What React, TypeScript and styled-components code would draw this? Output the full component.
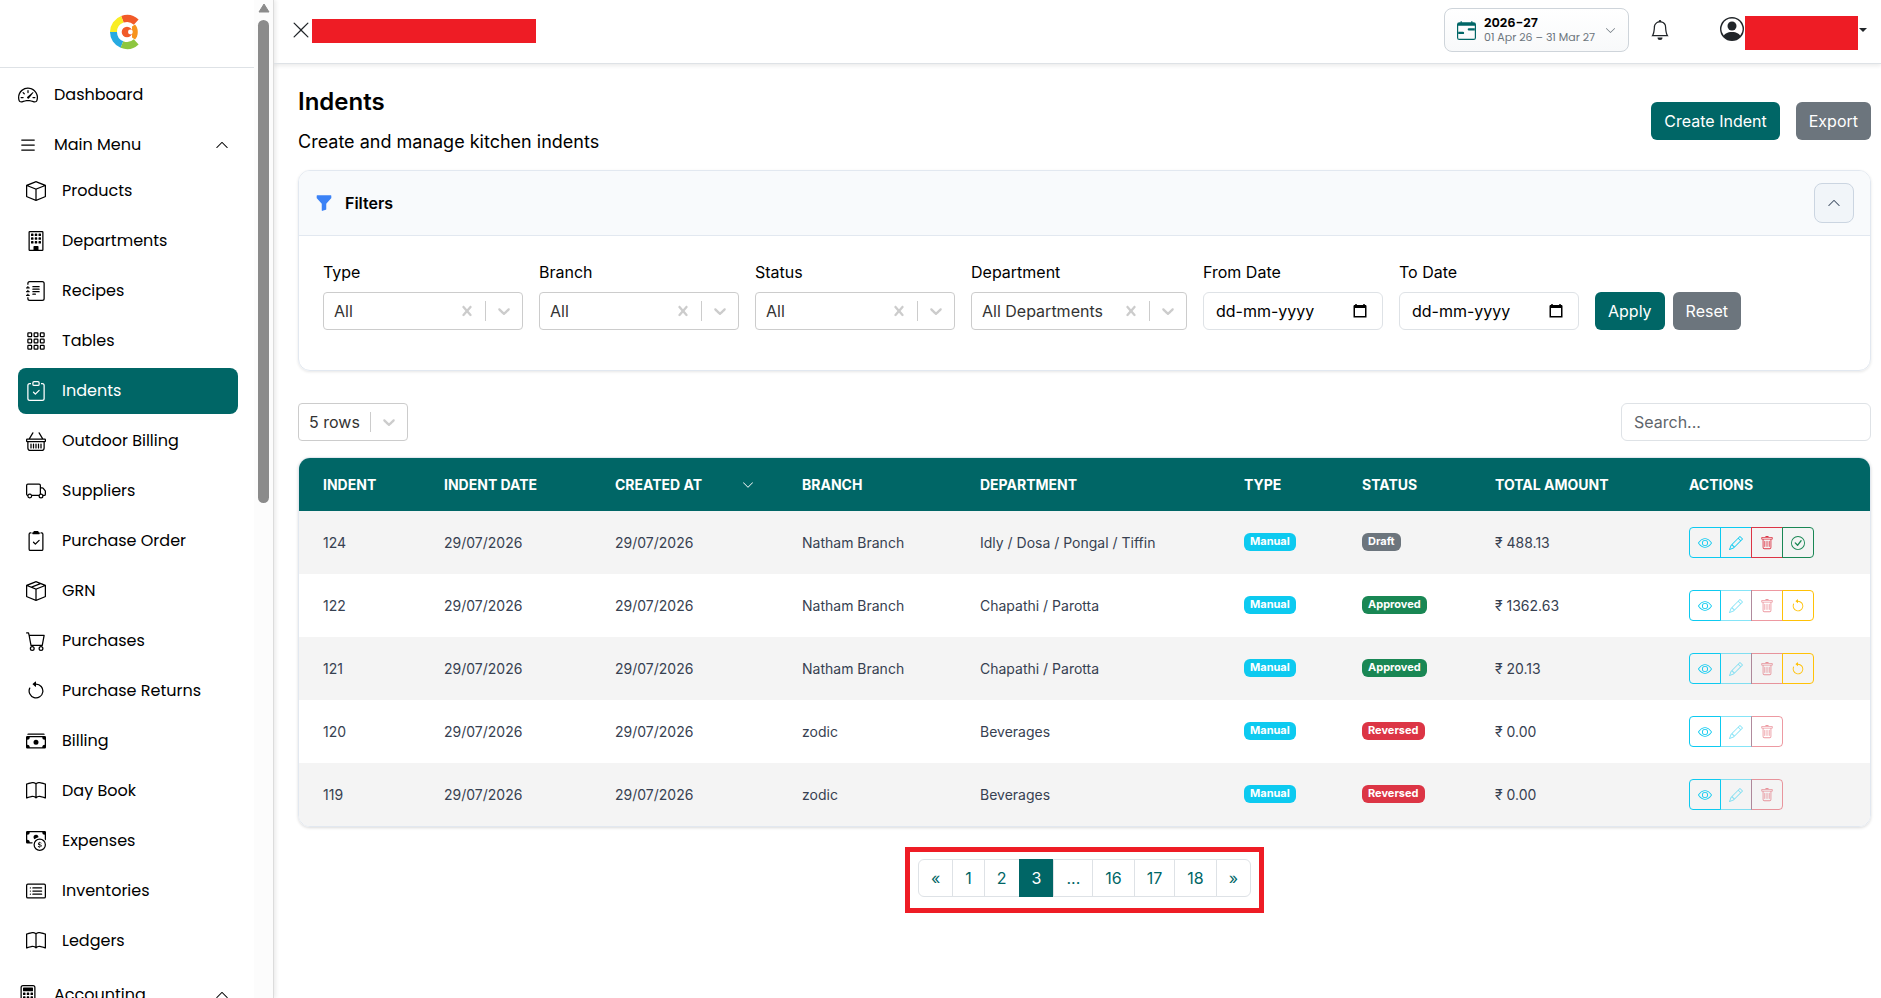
import React from 'react';
import styled, { createGlobalStyle, css } from 'styled-components';
import type { IconType } from 'react-icons';
import {
  BsArrowCounterclockwise,
  BsBasket,
  BsBell,
  BsBook,
  BsBox,
  BsBoxSeam,
  BsBuilding,
  BsCalculator,
  BsCalendarRange,
  BsCardList,
  BsCart,
  BsCashCoin,
  BsCashStack,
  BsCheckCircle,
  BsChevronDown,
  BsChevronUp,
  BsClipboard2Check,
  BsClipboardCheck,
  BsEye,
  BsFunnelFill,
  BsGrid3X3Gap,
  BsJournalText,
  BsList,
  BsPencil,
  BsPersonCircle,
  BsSpeedometer2,
  BsTrash,
  BsTruck,
  BsXLg,
} from 'react-icons/bs';

const teal = '#006666';
const slate = '#6c757d';
const line = '#e2e8f0';
const inter = "Inter, 'Liberation Sans', sans-serif";
const poppins = "Poppins, Inter, 'Liberation Sans', sans-serif";

const GlobalStyle = createGlobalStyle`
  *, *::before, *::after { box-sizing: border-box; }
  body {
    margin: 0;
    background: #fff;
    color: #000;
    font-family: ${inter};
    font-size: 16px;
    line-height: 24px;
  }
  button, input, select { font: inherit; color: inherit; }
  button { cursor: pointer; }
  h1, h2, p, ul { margin: 0; padding: 0; }
  svg { display: block; flex: none; }
`;

const Shell = styled.div`
  display: flex;
  height: 100vh;
  overflow: hidden;
`;

/* ---------- sidebar ---------- */

const Sidebar = styled.aside`
  display: flex;
  flex: none;
  width: 274px;
  border-right: 1px solid #dcdcdc;
  box-shadow: 2px 0 4px rgba(0, 0, 0, 0.08);
  font-family: ${poppins};
`;

const SidebarBody = styled.div`
  flex: 1;
  overflow: hidden;
`;

const Brand = styled.div`
  display: flex;
  justify-content: center;
  height: 68px;
  padding: 14px 0 0;
  border-bottom: 1px solid #dee2e6;
`;

const Nav = styled.nav`
  padding: 4px 16px 0 18px;
`;

const NavList = styled.ul`
  list-style: none;
`;

const NavGroup = styled.li<{ $gap?: number }>`
  margin-bottom: ${(p) => p.$gap ?? 4}px;
`;

const navRow = css`
  display: flex;
  align-items: center;
  gap: 16px;
  width: 100%;
  height: 46px;
  border: 0;
  border-radius: 8px;
  background: none;
  color: #000;
  font-size: 16px;
  text-align: left;
  text-decoration: none;
`;

const TopLink = styled.a`
  ${navRow}
`;

const GroupButton = styled.button`
  ${navRow}
  padding: 0 9px 0 0;
`;

const GroupLabel = styled.span`
  flex: 1;
`;

const SubLink = styled.a<{ $active?: boolean }>`
  ${navRow}
  width: 220px;
  margin-bottom: 4px;
  padding: 0 8px;
  ${(p) => p.$active && css`
    background: ${teal};
    color: #fff;
  `}
`;

const ScrollTrack = styled.div`
  display: flex;
  flex-direction: column;
  align-items: center;
  gap: 6px;
  width: 19px;
  padding-top: 3px;
  background: #fcfcfc;
`;

const ScrollThumb = styled.div`
  width: 11px;
  height: 48.5%;
  border-radius: 6px;
  background: #8b8b8b;
`;

/* ---------- top bar ---------- */

const Page = styled.div`
  flex: 1;
  min-width: 0;
  overflow: hidden;
`;

const TopBar = styled.header`
  display: flex;
  align-items: flex-start;
  justify-content: space-between;
  height: 64px;
  padding: 0 14px 0 17px;
  border-bottom: 1px solid #dee2e6;
  box-shadow: 0 2px 4px rgba(0, 0, 0, 0.08);
`;

const TopLeft = styled.div`
  display: flex;
  align-items: center;
  height: 62px;
  gap: 1px;
`;

const TopRight = styled.div`
  display: flex;
  align-items: center;
  height: 60px;
`;

const PlainButton = styled.button`
  display: flex;
  align-items: center;
  padding: 0;
  border: 0;
  background: none;
  color: #212529;
`;

const CloseButton = styled(PlainButton)`
  padding-bottom: 2px;
`;

const Redacted = styled.span<{ $w: number; $h: number }>`
  display: block;
  width: ${(p) => p.$w}px;
  height: ${(p) => p.$h}px;
  background: #ee1c25;
`;

const YearButton = styled.button`
  display: flex;
  align-items: center;
  gap: 8px;
  width: 185px;
  height: 44px;
  margin-right: 21px;
  padding: 0 12px;
  border: 1px solid #ced4da;
  border-radius: 8px;
  background: linear-gradient(#fff, #f8f9fa);
  color: ${teal};
  font-family: ${poppins};
  text-align: left;
`;

const YearText = styled.span`
  display: flex;
  flex: 1;
  flex-direction: column;
  font-size: 11px;
  line-height: 14px;
  color: ${slate};
  white-space: nowrap;
`;

const YearName = styled.strong`
  font-size: 13px;
  font-weight: 600;
  line-height: 14px;
  color: #000;
`;

const UserMenu = styled(PlainButton)`
  gap: 1px;
  margin-left: 50px;
`;

const Avatar = styled.span`
  margin-bottom: 2px;
`;

const UserName = styled.span`
  margin-top: 6px;
`;

const Caret = styled.span`
  border-top: 4px solid #212529;
  border-right: 4px solid transparent;
  border-left: 4px solid transparent;
`;

/* ---------- page content ---------- */

const Content = styled.main`
  padding: 22px 10px 24px 24px;
`;

const PageHead = styled.div`
  display: flex;
  align-items: center;
  justify-content: space-between;
  margin-bottom: 14px;
`;

const Title = styled.h1`
  margin-bottom: 10px;
  font-size: 24px;
  font-weight: 600;
  line-height: 32px;
`;

const Subtitle = styled.p`
  font-size: 18px;
  line-height: 28px;
`;

const ButtonRow = styled.div<{ $gap: number }>`
  display: flex;
  gap: ${(p) => p.$gap}px;
`;

const Button = styled.button<{ $tone?: 'teal' | 'grey' }>`
  height: 38px;
  padding: 0 13px;
  border: 0;
  border-radius: 6px;
  background: ${(p) => (p.$tone === 'grey' ? slate : teal)};
  color: #fff;
  white-space: nowrap;
`;

const Card = styled.section`
  margin-bottom: 32px;
  border: 1px solid ${line};
  border-radius: 12px;
  box-shadow: 0 1px 3px rgba(0, 0, 0, 0.1);
  overflow: hidden;
`;

const CardHead = styled.div`
  display: flex;
  align-items: center;
  justify-content: space-between;
  height: 65px;
  padding: 0 16px;
  border-bottom: 1px solid ${line};
  background: #f8fafc;
`;

const CardTitle = styled.h2`
  display: flex;
  align-items: center;
  gap: 12px;
  font-size: 16px;
  font-weight: 600;
`;

const CollapseButton = styled.button`
  display: flex;
  align-items: center;
  justify-content: center;
  width: 40px;
  height: 40px;
  padding: 0;
  border: 1px solid #cbd5e1;
  border-radius: 8px;
  background: #f1f5f9;
  color: #475569;
`;

const FilterForm = styled.form`
  display: flex;
  flex-wrap: wrap;
  align-items: flex-end;
  gap: 16px;
  padding: 24px 24px 40px;
`;

const Field = styled.div<{ $w: number }>`
  display: flex;
  flex-direction: column;
  gap: 8px;
  width: ${(p) => p.$w}px;
`;

const SelectBox = styled.div`
  display: flex;
  align-items: center;
  height: 38px;
  border: 1px solid #ccc;
  border-radius: 4px;
  color: #ccc;
`;

const NativeSelect = styled.select`
  flex: 1;
  min-width: 0;
  height: 36px;
  padding: 0 0 0 10px;
  border: 0;
  background: none;
  color: #333;
  appearance: none;
  outline: 0;
`;

const IconSlot = styled.button`
  display: flex;
  padding: 8px;
  border: 0;
  background: none;
  color: #ccc;
`;

const Divider = styled.span`
  width: 1px;
  height: 20px;
  background: #ccc;
`;

const InputBox = styled.div<{ $w?: number }>`
  display: flex;
  align-items: center;
  width: ${(p) => (p.$w ? `${p.$w}px` : 'auto')};
  height: 38px;
  padding: 0 15px 0 12px;
  border: 1px solid #dee2e6;
  border-radius: 6px;
`;

const TextInput = styled.input<{ $dark?: boolean }>`
  flex: 1;
  min-width: 0;
  padding: 0;
  border: 0;
  background: none;
  outline: 0;
  &::placeholder {
    color: ${(p) => (p.$dark ? '#000' : '#5f656b')};
    opacity: 1;
  }
`;

const TableTools = styled.div`
  display: flex;
  justify-content: space-between;
  margin-bottom: 16px;
`;

const RowsPicker = styled.div`
  width: 110px;
`;

/* ---------- table ---------- */

const TableCard = styled.div`
  border: 1px solid ${line};
  border-radius: 12px;
  box-shadow: 0 1px 3px rgba(0, 0, 0, 0.15);
  overflow: hidden;
`;

const Table = styled.table`
  width: 100%;
  border-collapse: collapse;
  table-layout: fixed;
  font-size: 14px;
`;

const Th = styled.th<{ $w: number }>`
  width: ${(p) => p.$w}px;
  height: 53px;
  padding: 0 24px;
  background: ${teal};
  color: #fff;
  font-weight: 700;
  text-align: left;
  white-space: nowrap;
`;

const HeadLabel = styled.span`
  display: flex;
  align-items: center;
  justify-content: space-between;
`;

const Row = styled.tr`
  height: 63px;
  &:nth-child(odd) { background: #f4f4f4; }
`;

const Td = styled.td`
  padding: 0 0 0 24px;
  color: #374151;
  white-space: nowrap;
`;

const Badge = styled.span<{ $bg: string }>`
  display: block;
  width: fit-content;
  margin-bottom: 2px;
  padding: 2px 6px 4px;
  border-radius: 6px;
  background: ${(p) => p.$bg};
  color: #fff;
  font-size: 11px;
  font-weight: 700;
  line-height: 12px;
`;

const ActionGroup = styled.div`
  display: flex;
`;

const ActionButton = styled.button<{ $tone: string }>`
  position: relative;
  z-index: 1;
  display: flex;
  align-items: center;
  justify-content: center;
  width: 32px;
  height: 31px;
  padding: 0;
  border: 1px solid ${(p) => p.$tone};
  background: none;
  color: ${(p) => p.$tone};
  &:disabled { z-index: 0; opacity: 0.5; }
  &:first-child { border-radius: 4px 0 0 4px; }
  &:last-child { border-radius: 0 4px 4px 0; }
  & + & { margin-left: -1px; }
`;

/* ---------- pagination ---------- */

const PagerFrame = styled.nav`
  width: fit-content;
  margin: 20px auto 0;
  padding: 7px 8px 11px;
  border: 5px solid #ee1c25;
`;

const PagerList = styled.ul`
  display: flex;
  list-style: none;
`;

const PageButton = styled.button<{ $active?: boolean }>`
  height: 38px;
  padding: 0 12px;
  border: 1px solid ${(p) => (p.$active ? teal : '#dee2e6')};
  background: ${(p) => (p.$active ? teal : '#fff')};
  color: ${(p) => (p.$active ? '#fff' : teal)};
  li + li > & { margin-left: -1px; }
  li:first-child > & { border-radius: 6px 0 0 6px; }
  li:last-child > & { border-radius: 0 6px 6px 0; }
`;

/* ---------- drawings ---------- */

const Logo = () => {
  const arcs = [
    { color: '#f15a29', from: -110, len: 63 },
    { color: '#f9ed25', from: 180, len: 70 },
    { color: '#27aae1', from: 112, len: 68 },
    { color: '#8dc63f', from: 47, len: 65 },
  ];
  return (
    <svg width="36" height="36" viewBox="0 0 36 36" role="img" aria-label="Company logo">
      {arcs.map((a) => (
        <circle
          key={a.color}
          cx="18" cy="18" r="13.5" fill="none" stroke={a.color} strokeWidth="7"
          pathLength="360" strokeDasharray={`${a.len} 360`} transform={`rotate(${a.from} 18 18)`}
        />
      ))}
      <path d="M23 12.5 26 10.5C29.7 14 29.7 22 26 25.5L23 23.5Z" fill="#f7941e" />
      <circle cx="18" cy="18" r="5.3" fill="#f15a29" />
      <circle cx="21.4" cy="18" r="2.4" fill="#fff" />
    </svg>
  );
};

const CrossGlyph = () => (
  <svg width="20" height="20" viewBox="0 0 20 20" fill="currentColor" aria-hidden="true">
    <path d="M14.348 14.849c-0.469 0.469-1.229 0.469-1.697 0l-2.651-3.030-2.651 3.029c-0.469 0.469-1.229 0.469-1.697 0-0.469-0.469-0.469-1.229 0-1.697l2.758-3.15-2.759-3.152c-0.469-0.469-0.469-1.228 0-1.697s1.228-0.469 1.697 0l2.652 3.031 2.651-3.031c0.469-0.469 1.228-0.469 1.697 0s0.469 1.229 0 1.697l-2.758 3.152 2.758 3.15c0.469 0.469 0.469 1.229 0 1.698z" />
  </svg>
);

const DownGlyph = () => (
  <svg width="20" height="20" viewBox="0 0 20 20" fill="currentColor" aria-hidden="true">
    <path d="M4.516 7.548c0.436-0.446 1.043-0.481 1.576 0l3.908 3.747 3.908-3.747c0.533-0.481 1.141-0.446 1.574 0 0.436 0.445 0.408 1.197 0 1.615-0.406 0.418-4.695 4.502-4.695 4.502-0.217 0.223-0.502 0.335-0.787 0.335s-0.57-0.112-0.789-0.335c0 0-4.287-4.084-4.695-4.502s-0.436-1.17 0-1.615z" />
  </svg>
);

const CalendarGlyph = () => (
  <svg width="14" height="16" viewBox="0 0 14 16" aria-hidden="true">
    <path d="M3 1v2M11 1v2" stroke="#000" strokeWidth="1.5" />
    <path d="M1 2h12v3H1z" fill="#000" />
    <path d="M1.25 3.25h11.5v10.5H1.25z" fill="none" stroke="#000" strokeWidth="1.5" />
  </svg>
);

const ScrollArrow = () => (
  <svg width="12" height="11" viewBox="0 0 12 11" aria-hidden="true">
    <path d="M6 1 11 9H1Z" fill="#8b8b8b" stroke="#8b8b8b" strokeLinejoin="round" />
  </svg>
);

/* ---------- data ---------- */

const menu: [string, IconType][] = [
  ['Products', BsBox],
  ['Departments', BsBuilding],
  ['Recipes', BsJournalText],
  ['Tables', BsGrid3X3Gap],
  ['Indents', BsClipboardCheck],
  ['Outdoor Billing', BsBasket],
  ['Suppliers', BsTruck],
  ['Purchase Order', BsClipboard2Check],
  ['GRN', BsBoxSeam],
  ['Purchases', BsCart],
  ['Purchase Returns', BsArrowCounterclockwise],
  ['Billing', BsCashStack],
  ['Day Book', BsBook],
  ['Expenses', BsCashCoin],
  ['Inventories', BsCardList],
  ['Ledgers', BsBook],
];

type Status = 'Draft' | 'Approved' | 'Reversed';

const statusColor: Record<Status, string> = {
  Draft: slate,
  Approved: '#198754',
  Reversed: '#dc3545',
};

const indents: { id: number; branch: string; department: string; status: Status; total: string }[] = [
  { id: 124, branch: 'Natham Branch', department: 'Idly / Dosa / Pongal / Tiffin', status: 'Draft', total: '488.13' },
  { id: 122, branch: 'Natham Branch', department: 'Chapathi / Parotta', status: 'Approved', total: '1362.63' },
  { id: 121, branch: 'Natham Branch', department: 'Chapathi / Parotta', status: 'Approved', total: '20.13' },
  { id: 120, branch: 'zodic', department: 'Beverages', status: 'Reversed', total: '0.00' },
  { id: 119, branch: 'zodic', department: 'Beverages', status: 'Reversed', total: '0.00' },
];

const columns: [string, number][] = [
  ['INDENT', 121],
  ['INDENT DATE', 171],
  ['CREATED AT', 187],
  ['BRANCH', 178],
  ['DEPARTMENT', 264],
  ['TYPE', 118],
  ['STATUS', 133],
  ['TOTAL AMOUNT', 194],
  ['ACTIONS', 205],
];

const pages = ['«', '1', '2', '3', '...', '16', '17', '18', '»'];

/* ---------- parts ---------- */

const Picker = ({ id, value, clearable }: { id: string; value: string; clearable?: boolean }) => (
  <SelectBox>
    <NativeSelect id={id} aria-label={clearable ? undefined : 'Rows per page'} defaultValue={value}>
      <option>{value}</option>
    </NativeSelect>
    {clearable && (
      <IconSlot type="button" aria-label="Clear">
        <CrossGlyph />
      </IconSlot>
    )}
    <Divider />
    <IconSlot type="button" aria-label="Open">
      <DownGlyph />
    </IconSlot>
  </SelectBox>
);

const SelectField = ({ label, value, width }: { label: string; value: string; width: number }) => (
  <Field $w={width}>
    <label htmlFor={label}>{label}</label>
    <Picker id={label} value={value} clearable />
  </Field>
);

const DateField = ({ label }: { label: string }) => (
  <Field $w={180}>
    <label htmlFor={label}>{label}</label>
    <InputBox>
      <TextInput $dark id={label} placeholder="dd-mm-yyyy" />
      <PlainButton type="button" aria-label={`Pick ${label}`}>
        <CalendarGlyph />
      </PlainButton>
    </InputBox>
  </Field>
);

const Actions = ({ status }: { status: Status }) => {
  const locked = status !== 'Draft';
  return (
    <ActionGroup>
      <ActionButton $tone="#0dcaf0" aria-label="View"><BsEye size={14} /></ActionButton>
      <ActionButton $tone="#0dcaf0" aria-label="Edit" disabled={locked}><BsPencil size={14} /></ActionButton>
      <ActionButton $tone="#dc3545" aria-label="Delete" disabled={locked}><BsTrash size={14} /></ActionButton>
      {status === 'Draft' && (
        <ActionButton $tone="#198754" aria-label="Approve"><BsCheckCircle size={14} /></ActionButton>
      )}
      {status === 'Approved' && (
        <ActionButton $tone="#ffc107" aria-label="Reverse"><BsArrowCounterclockwise size={14} /></ActionButton>
      )}
    </ActionGroup>
  );
};

export default function App() {
  return (
    <Shell>
      <GlobalStyle />
      <Sidebar>
        <SidebarBody>
          <Brand><Logo /></Brand>
          <Nav aria-label="Main">
            <NavList>
              <NavGroup>
                <TopLink href="#dashboard"><BsSpeedometer2 size={20} />Dashboard</TopLink>
              </NavGroup>
              <NavGroup $gap={8}>
                <GroupButton type="button">
                  <BsList size={20} />
                  <GroupLabel>Main Menu</GroupLabel>
                  <BsChevronUp size={14} />
                </GroupButton>
                <NavList>
                  {menu.map(([name, Icon]) => (
                    <li key={name}>
                      <SubLink href={`#${name}`} $active={name === 'Indents'}>
                        <Icon size={20} />{name}
                      </SubLink>
                    </li>
                  ))}
                </NavList>
              </NavGroup>
              <NavGroup>
                <GroupButton type="button">
                  <BsCalculator size={20} />
                  <GroupLabel>Accounting</GroupLabel>
                  <BsChevronUp size={14} />
                </GroupButton>
              </NavGroup>
            </NavList>
          </Nav>
        </SidebarBody>
        <ScrollTrack>
          <ScrollArrow />
          <ScrollThumb />
        </ScrollTrack>
      </Sidebar>

      <Page>
        <TopBar>
          <TopLeft>
            <CloseButton type="button" aria-label="Close menu"><BsXLg size={20} /></CloseButton>
            <Redacted $w={224} $h={24} />
          </TopLeft>
          <TopRight>
            <YearButton type="button">
              <BsCalendarRange size={19} />
              <YearText>
                <YearName>2026-27</YearName>
                01 Apr 26 – 31 Mar 27
              </YearText>
              <BsChevronDown size={11} color={slate} />
            </YearButton>
            <PlainButton type="button" aria-label="Notifications"><BsBell size={20} /></PlainButton>
            <UserMenu type="button" aria-label="Account">
              <Avatar><BsPersonCircle size={24} /></Avatar>
              <UserName><Redacted $w={113} $h={34} /></UserName>
              <Caret />
            </UserMenu>
          </TopRight>
        </TopBar>

        <Content>
          <PageHead>
            <div>
              <Title>Indents</Title>
              <Subtitle>Create and manage kitchen indents</Subtitle>
            </div>
            <ButtonRow $gap={16}>
              <Button>Create Indent</Button>
              <Button $tone="grey">Export</Button>
            </ButtonRow>
          </PageHead>

          <Card>
            <CardHead>
              <CardTitle><BsFunnelFill size={18} color="#3b82f6" />Filters</CardTitle>
              <CollapseButton aria-label="Collapse filters"><BsChevronUp size={14} /></CollapseButton>
            </CardHead>
            <FilterForm>
              <SelectField label="Type" value="All" width={200} />
              <SelectField label="Branch" value="All" width={200} />
              <SelectField label="Status" value="All" width={200} />
              <SelectField label="Department" value="All Departments" width={216} />
              <DateField label="From Date" />
              <DateField label="To Date" />
              <ButtonRow $gap={8}>
                <Button type="button">Apply</Button>
                <Button type="button" $tone="grey">Reset</Button>
              </ButtonRow>
            </FilterForm>
          </Card>

          <TableTools>
            <RowsPicker><Picker id="rows" value="5 rows" /></RowsPicker>
            <InputBox $w={250}>
              <TextInput aria-label="Search" placeholder="Search..." />
            </InputBox>
          </TableTools>

          <TableCard>
            <Table>
              <thead>
                <tr>
                  {columns.map(([name, width]) => (
                    <Th key={name} $w={width}>
                      <HeadLabel>
                        {name}
                        {name === 'CREATED AT' && <BsChevronDown size={12} />}
                      </HeadLabel>
                    </Th>
                  ))}
                </tr>
              </thead>
              <tbody>
                {indents.map((r) => (
                  <Row key={r.id}>
                    <Td>{r.id}</Td>
                    <Td>29/07/2026</Td>
                    <Td>29/07/2026</Td>
                    <Td>{r.branch}</Td>
                    <Td>{r.department}</Td>
                    <Td><Badge $bg="#0dcaf0">Manual</Badge></Td>
                    <Td><Badge $bg={statusColor[r.status]}>{r.status}</Badge></Td>
                    <Td>₹ {r.total}</Td>
                    <Td><Actions status={r.status} /></Td>
                  </Row>
                ))}
              </tbody>
            </Table>
          </TableCard>

          <PagerFrame aria-label="Pagination">
            <PagerList>
              {pages.map((p) => (
                <li key={p}>
                  <PageButton $active={p === '3'}>{p}</PageButton>
                </li>
              ))}
            </PagerList>
          </PagerFrame>
        </Content>
      </Page>
    </Shell>
  );
}
